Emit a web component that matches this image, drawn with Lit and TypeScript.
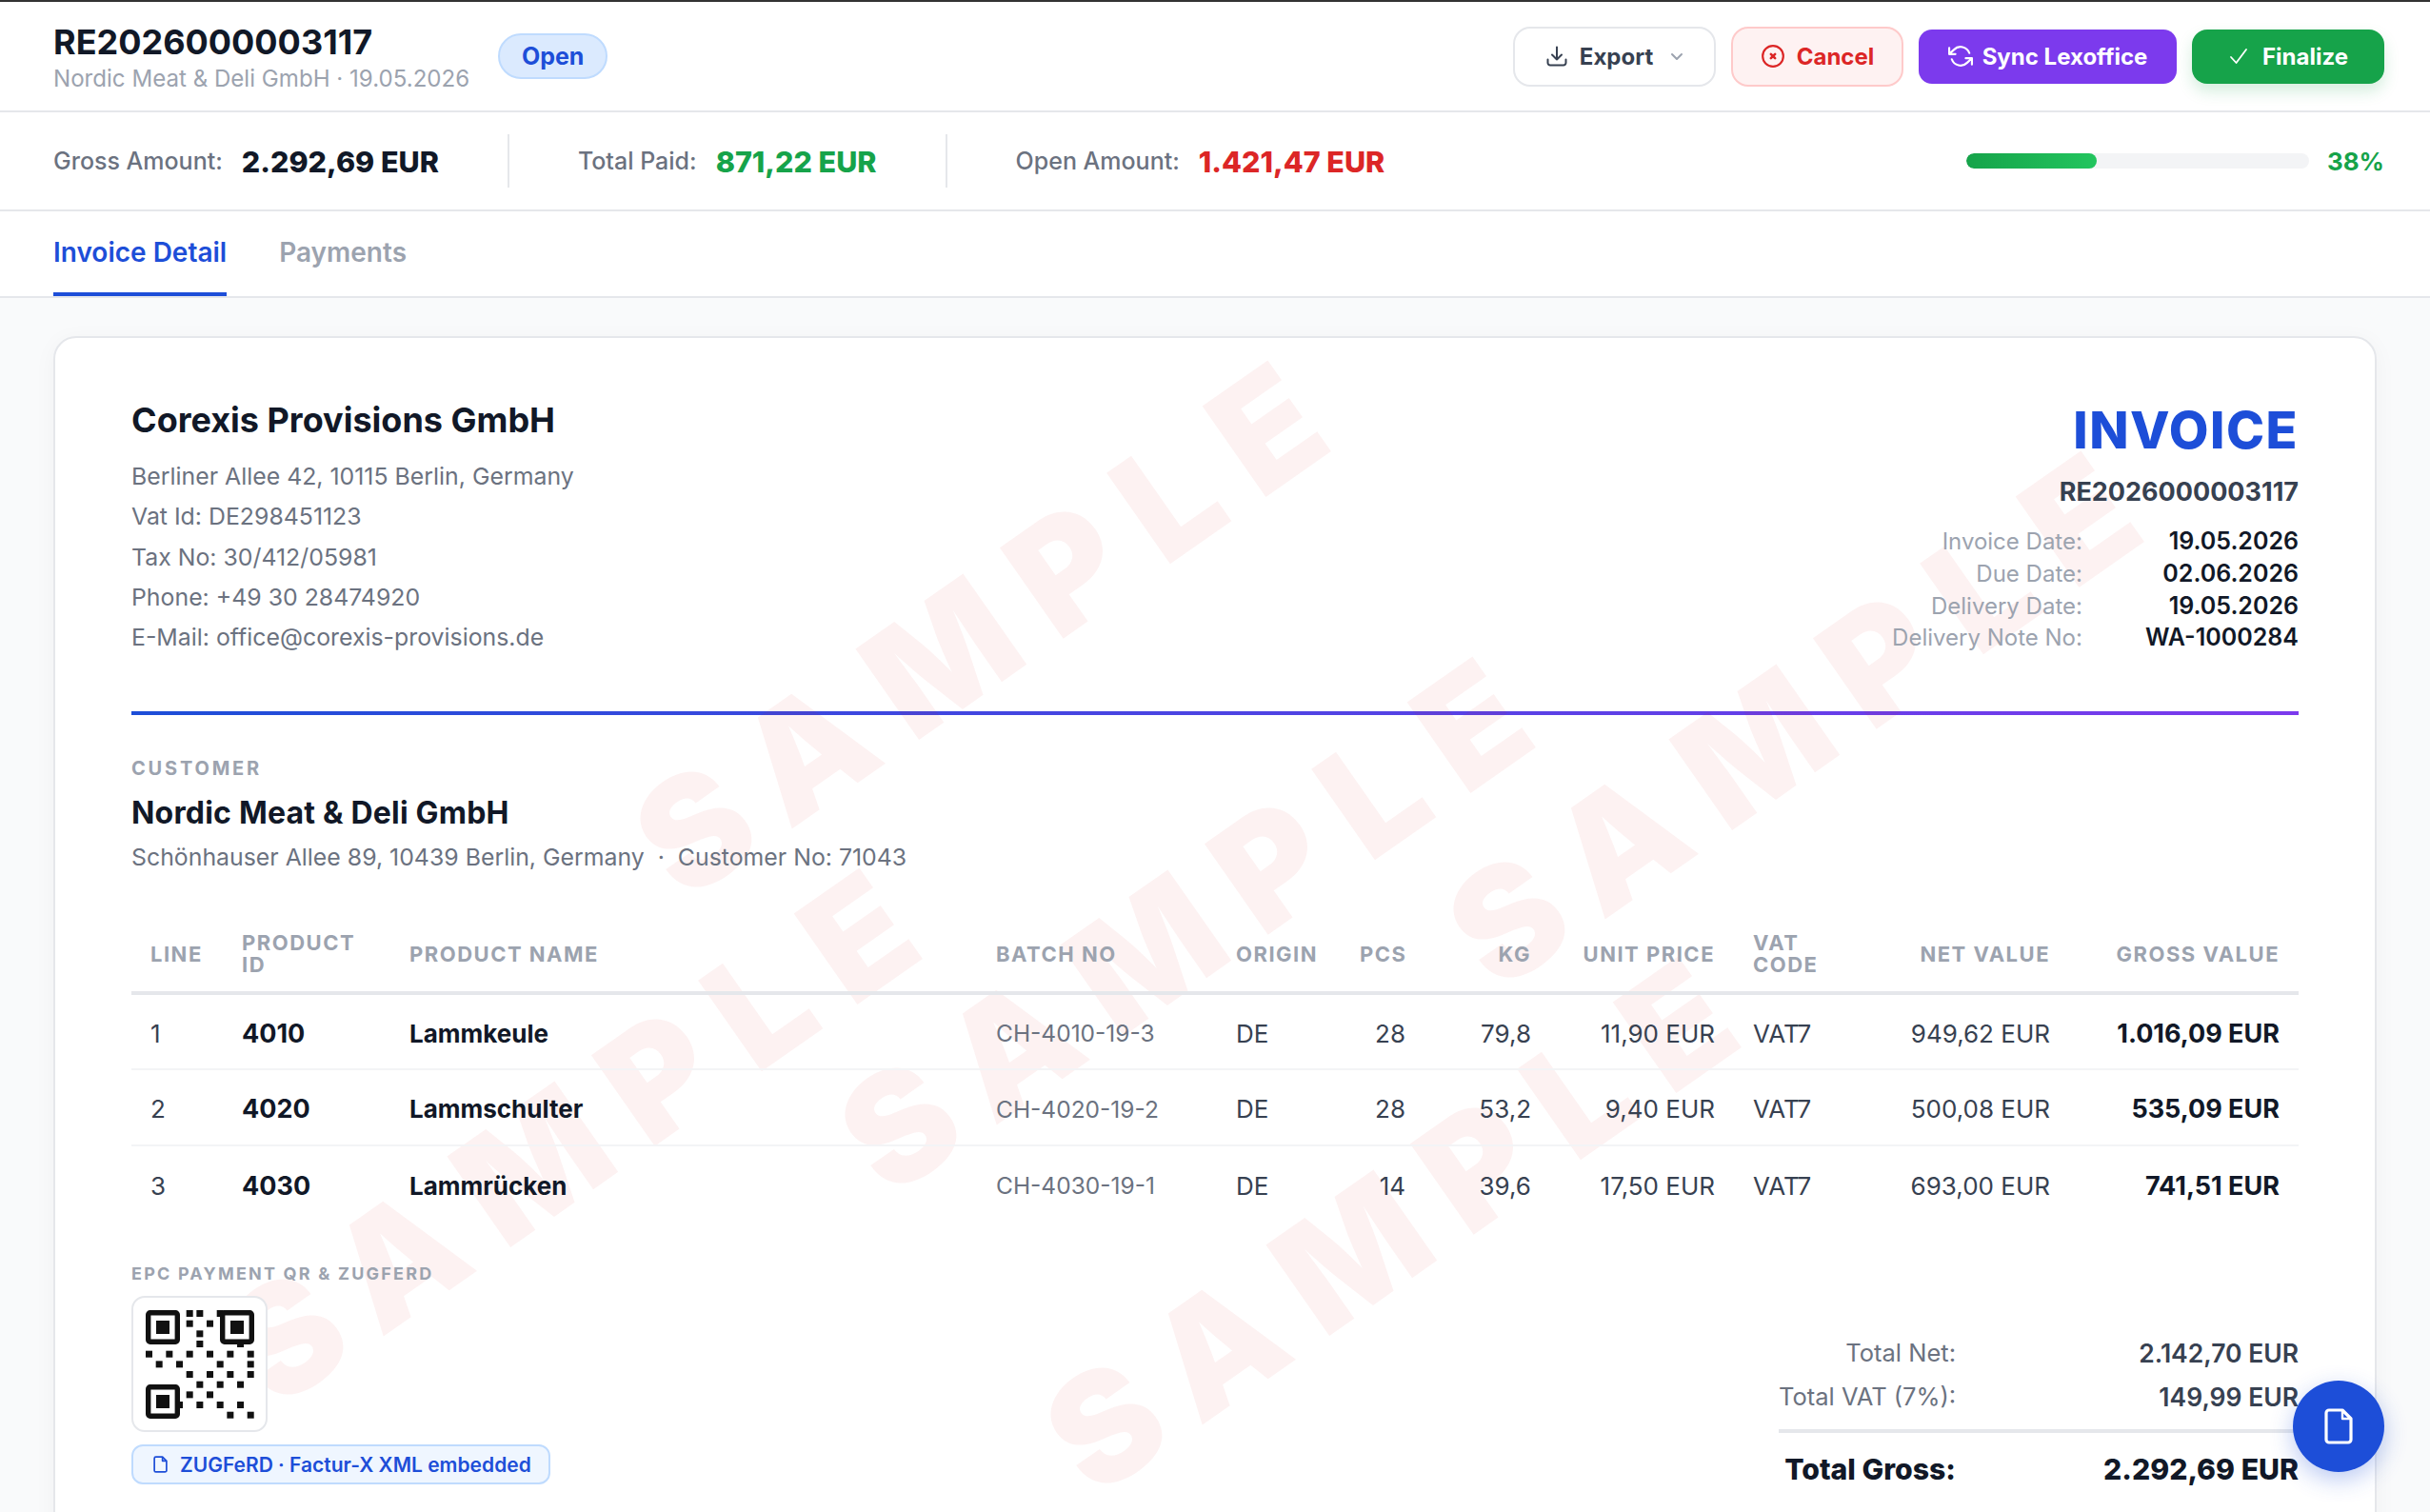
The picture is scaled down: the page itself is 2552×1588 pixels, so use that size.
import { LitElement, html, css, svg } from "lit";
import { customElement } from "lit/decorators.js";

const rows = [
  ["1", "4010", "Lammkeule", "CH-4010-19-3", "DE", "28", "79,8", "11,90 EUR", "VAT7", "949,62 EUR", "1.016,09 EUR"],
  ["2", "4020", "Lammschulter", "CH-4020-19-2", "DE", "28", "53,2", "9,40 EUR", "VAT7", "500,08 EUR", "535,09 EUR"],
  ["3", "4030", "Lammrücken", "CH-4030-19-1", "DE", "14", "39,6", "17,50 EUR", "VAT7", "693,00 EUR", "741,51 EUR"],
];
const marks = [[983, 298], [1198, 609], [1837, 393], [554, 831], [1414, 924]];
const cells = [[4,0],[5,0],[7,0],[4,1],[6,1],[5,2],[5,3],[9,3],[0,4],[2,4],[4,4],[6,4],[8,4],[10,4],[1,5],[3,5],[7,5],[10,5],[4,6],[6,6],[8,6],[10,6],[5,7],[7,7],[9,7],[4,8],[6,8],[3,9],[5,9],[7,9],[9,9],[2,10],[8,10],[10,10]];
const finders = [[0, 0], [78, 0], [0, 78]];

const fileIcon = html`<svg class="badge-ic" viewBox="0 0 16 18" fill="none" stroke="currentColor" stroke-width="1.6" stroke-linejoin="round"><path d="M2 3a1.5 1.5 0 0 1 1.5-1.5H10L14 5.5V15a1.5 1.5 0 0 1-1.5 1.5h-9A1.5 1.5 0 0 1 2 15Z"/><path d="M10 1.5v4h4"/></svg>`;

@customElement("app-root")
export class AppRoot extends LitElement {
  static styles = css`
    :host { display: block; height: 1588px; overflow: hidden; position: relative; background: #f9fafb; font-family: Inter, "Liberation Sans", sans-serif; color: #111827; }
    * { box-sizing: border-box; }
    .header { height: 118px; border-top: 2px solid #333; border-bottom: 2px solid #e5e7eb; background: #fff; display: flex; align-items: center; padding: 0 48px 0 56px; }
    .id { padding-top: 4px; }
    .title { font-size: 36px; line-height: 44px; font-weight: 700; }
    .sub { font-size: 24.1px; line-height: 34px; color: #9ca3af; }
    .pill { margin-left: 30px; height: 48px; width: 115px; display: flex; align-items: center; justify-content: center; border-radius: 24px; border: 2px solid #bfdbfe; background: #dbeafe; color: #1d4ed8; font-size: 25px; font-weight: 700; }
    .actions { margin-left: auto; display: flex; align-items: center; gap: 16px; }
    .btn { display: flex; align-items: center; justify-content: center; font-size: 24px; font-weight: 700; border-radius: 14px; height: 57px; }
    .btn svg { flex: none; }
    .export { width: 213px; height: 63px; border: 2px solid #e5e7eb; border-radius: 18px; background: #fff; color: #374151; gap: 12px; }
    .export .chev { color: #9ca3af; margin-left: 6px; }
    .cancel { width: 181px; height: 63px; border: 2px solid #fecaca; border-radius: 18px; background: #fef2f2; color: #dc2626; gap: 12px; }
    .sync { width: 271px; background: #7c3aed; color: #fff; gap: 10px; }
    .finalize { width: 202px; background: #16a34a; color: #fff; gap: 14px; border-radius: 16px; box-shadow: 0 8px 16px rgba(22, 163, 74, 0.18); }
    .stats { height: 104px; border-bottom: 2px solid #e5e7eb; background: #fff; display: flex; align-items: center; padding: 0 48px 0 56px; }
    .stat { display: flex; align-items: center; gap: 20px; }
    .stat-l { font-size: 25px; font-weight: 500; color: #6b7280; }
    .stat-v { font-size: 30.5px; font-weight: 800; }
    .green { color: #16a34a; }
    .red { color: #dc2626; }
    .vr { width: 2px; height: 56px; background: #e5e7eb; margin: 0 72px; }
    .prog { margin-left: auto; display: flex; align-items: center; gap: 19px; }
    .track { width: 360px; height: 16px; border-radius: 8px; background: #f3f4f6; overflow: hidden; }
    .fill { height: 100%; border-radius: 8px; background: linear-gradient(90deg, #16a34a, #22c55e); }
    .pct { font-size: 26px; font-weight: 700; color: #16a34a; }
    .tabs { height: 91px; border-bottom: 2px solid #e5e7eb; background: #fff; display: flex; gap: 55px; padding-left: 56px; }
    .tab { height: 89px; display: flex; align-items: center; font-size: 28px; font-weight: 600; color: #9ca3af; border-bottom: 4px solid transparent; }
    .tab.on { color: #1d4ed8; border-bottom-color: #1d4ed8; }
    .main { padding: 40px 56px 0; }
    .card { position: relative; overflow: hidden; background: #fff; border: 2px solid #e5e7eb; border-radius: 24px; padding: 64px 80px 80px; box-shadow: 0 4px 24px rgba(0, 0, 0, 0.04); }
    .mark { position: absolute; transform: translate(-50%, -50%) rotate(-35deg); font-size: 160px; line-height: 1; font-weight: 900; letter-spacing: 32px; color: rgba(220, 38, 38, 0.06); white-space: nowrap; pointer-events: none; }
    .top { display: flex; justify-content: space-between; padding-bottom: 57px; position: relative; }
    .co { font-size: 36px; line-height: 44px; font-weight: 700; margin-bottom: 16px; }
    .line { font-size: 24.85px; line-height: 42.3px; color: #6b7280; }
    .right { text-align: right; padding-top: 3px; }
    .inv { font-size: 54px; line-height: 60px; font-weight: 800; color: #1d4ed8; letter-spacing: 1.5px; }
    .num { font-size: 27px; line-height: 36px; font-weight: 700; color: #374151; margin-top: 17px; margin-bottom: 17px; }
    .dates { display: grid; grid-template-columns: auto auto; justify-content: end; column-gap: 66px; line-height: 33.8px; }
    .dates .k { font-size: 24px; color: #9ca3af; }
    .dates .v { font-size: 25px; font-weight: 600; }
    .rule { height: 4px; background: linear-gradient(90deg, #1d4ed8, #7c3aed); }
    .lab { font-size: 20px; line-height: 24px; font-weight: 700; letter-spacing: 2.8px; color: #9ca3af; text-transform: uppercase; }
    .epc { font-size: 18px; letter-spacing: 2.2px; }
    .cust { margin-top: 44px; position: relative; }
    .name { font-size: 32px; line-height: 40px; font-weight: 700; margin-top: 15px; letter-spacing: 0.2px; }
    .addr { font-size: 24.85px; line-height: 32px; color: #6b7280; margin-top: 10px; }
    table { width: 100%; table-layout: fixed; border-collapse: collapse; margin-top: 47px; position: relative; }
    th { font-size: 22px; line-height: 23px; font-weight: 700; letter-spacing: 1.5px; color: #9ca3af; text-align: left; padding: 16px 20px; border-bottom: 4px solid #e5e7eb; vertical-align: middle; }
    td { height: 80px; padding: 3px 0 0 20px; font-size: 26px; color: #374151; border-bottom: 2px solid #f3f4f6; white-space: nowrap; }
    td.r { padding: 3px 20px 0 0; }
    tr:last-child td { border-bottom: none; }
    .r { text-align: right; }
    .b { font-weight: 700; color: #111827; }
    .bb { font-size: 27px; font-weight: 700; color: #111827; }
    .batch { font-size: 24.5px; color: #6b7280; }
    .c1 { width: 96px; } .c2 { width: 176px; } .c3 { width: 616px; } .c4 { width: 252px; } .c5 { width: 130px; } .c6 { width: 88px; }
    .c7 { width: 132px; } .c8 { width: 193px; } .c9 { width: 167px; } .c10 { width: 185px; } .c11 { width: 241px; }
    .foot { display: flex; justify-content: space-between; margin-top: 43px; position: relative; }
    .qr { width: 143px; height: 143px; border: 2px solid #e5e7eb; border-radius: 14px; background: #fff; margin-top: 11px; display: flex; align-items: center; justify-content: center; }
    .qr svg { width: 114px; height: 114px; display: block; }
    .badge { width: 440px; height: 42px; margin-top: 13px; border: 2px solid #bfdbfe; border-radius: 12px; background: #eff6ff; color: #1d4ed8; font-size: 21px; font-weight: 600; display: flex; align-items: center; gap: 12px; padding-left: 20px; white-space: nowrap; }
    .badge-ic { width: 17px; height: 20px; flex: none; }
    .totals { width: 546px; margin-top: 72px; display: grid; grid-template-columns: 186px 1fr; align-items: center; }
    .totals .k { font-size: 25.5px; line-height: 46px; color: #6b7280; text-align: right; white-space: nowrap; }
    .totals .v { font-size: 26.5px; line-height: 46px; font-weight: 600; color: #374151; text-align: right; }
    .sep { grid-column: 1 / -1; height: 4px; background: #e5e7eb; margin: 11px 0 17px; }
    .totals .gk, .totals .gv { font-size: 30.2px; line-height: 42px; font-weight: 800; color: #111827; text-align: right; white-space: nowrap; }
    .fab { position: absolute; right: 48px; bottom: 42px; width: 96px; height: 96px; border-radius: 50%; background: #1d4ed8; display: flex; align-items: center; justify-content: center; box-shadow: 0 8px 24px rgba(29, 78, 216, 0.3); }
    .fab svg { width: 32px; height: 38px; }
  `;

  render() {
    return html`
      <div class="header">
        <div class="id">
          <div class="title">RE2026000003117</div>
          <div class="sub">Nordic Meat &amp; Deli GmbH · 19.05.2026</div>
        </div>
        <div class="pill">Open</div>
        <div class="actions">
          <div class="btn export">
            <svg width="24" height="24" viewBox="0 0 24 24" fill="none" stroke="currentColor" stroke-width="2" stroke-linecap="round" stroke-linejoin="round"><path d="M12 2.5v13M7 10.5l5 5 5-5M2.5 15.5v3.5a2.5 2.5 0 0 0 2.5 2.5h14a2.5 2.5 0 0 0 2.5-2.5v-3.5"/></svg>
            <span>Export</span>
            <svg class="chev" width="14" height="14" viewBox="0 0 14 14" fill="none" stroke="currentColor" stroke-width="2" stroke-linecap="round" stroke-linejoin="round"><path d="M2 5l5 5 5-5"/></svg>
          </div>
          <div class="btn cancel">
            <svg width="26" height="26" viewBox="0 0 24 24" fill="none" stroke="currentColor" stroke-width="2" stroke-linecap="round"><circle cx="12" cy="12" r="10"/><path d="M10 10l4 4M14 10l-4 4" stroke-width="2.4"/></svg>
            <span>Cancel</span>
          </div>
          <div class="btn sync">
            <svg width="26" height="26" viewBox="0 0 24 24" fill="none" stroke="currentColor" stroke-width="2" stroke-linecap="round" stroke-linejoin="round"><path d="M1 4v6h6M23 20v-6h-6M20.49 9A9 9 0 0 0 5.64 5.64L1 10M23 14l-4.64 4.36A9 9 0 0 1 3.51 15"/></svg>
            <span>Sync Lexoffice</span>
          </div>
          <div class="btn finalize">
            <svg width="22" height="22" viewBox="0 0 22 22" fill="none" stroke="currentColor" stroke-width="1.8" stroke-linecap="round" stroke-linejoin="round"><path d="M3 12l5.5 6L19 4"/></svg>
            <span>Finalize</span>
          </div>
        </div>
      </div>
      <div class="stats">
        <div class="stat"><span class="stat-l">Gross Amount:</span><span class="stat-v">2.292,69 EUR</span></div>
        <div class="vr"></div>
        <div class="stat"><span class="stat-l">Total Paid:</span><span class="stat-v green">871,22 EUR</span></div>
        <div class="vr"></div>
        <div class="stat"><span class="stat-l">Open Amount:</span><span class="stat-v red">1.421,47 EUR</span></div>
        <div class="prog">
          <div class="track"><div class="fill" style="width:38%"></div></div>
          <span class="pct">38%</span>
        </div>
      </div>
      <div class="tabs">
        <div class="tab on">Invoice Detail</div>
        <div class="tab">Payments</div>
      </div>
      <div class="main">
        <div class="card">
          ${marks.map(([x, y]) => html`<div class="mark" style="left:${x}px;top:${y}px">SAMPLE</div>`)}
          <div class="top">
            <div>
              <div class="co">Corexis Provisions GmbH</div>
              <div class="line">Berliner Allee 42, 10115 Berlin, Germany</div>
              <div class="line">Vat Id: DE298451123</div>
              <div class="line">Tax No: 30/412/05981</div>
              <div class="line">Phone: +49 30 28474920</div>
              <div class="line">E-Mail: office@corexis-provisions.de</div>
            </div>
            <div class="right">
              <div class="inv">INVOICE</div>
              <div class="num">RE2026000003117</div>
              <div class="dates">
                <span class="k">Invoice Date:</span><span class="v">19.05.2026</span>
                <span class="k">Due Date:</span><span class="v">02.06.2026</span>
                <span class="k">Delivery Date:</span><span class="v">19.05.2026</span>
                <span class="k">Delivery Note No:</span><span class="v">WA-1000284</span>
              </div>
            </div>
          </div>
          <div class="rule"></div>
          <div class="cust">
            <div class="lab">Customer</div>
            <div class="name">Nordic Meat &amp; Deli GmbH</div>
            <div class="addr">Schönhauser Allee 89, 10439 Berlin, Germany &nbsp;·&nbsp; Customer No: 71043</div>
          </div>
          <table>
            <thead>
              <tr>
                <th class="c1">LINE</th>
                <th class="c2">PRODUCT<br />ID</th>
                <th class="c3">PRODUCT NAME</th>
                <th class="c4">BATCH NO</th>
                <th class="c5">ORIGIN</th>
                <th class="c6 r">PCS</th>
                <th class="c7 r">KG</th>
                <th class="c8 r">UNIT PRICE</th>
                <th class="c9">VAT<br />CODE</th>
                <th class="c10 r">NET VALUE</th>
                <th class="c11 r">GROSS VALUE</th>
              </tr>
            </thead>
            <tbody>
              ${rows.map((r) => html`<tr>
                <td>${r[0]}</td>
                <td class="bb">${r[1]}</td>
                <td class="b">${r[2]}</td>
                <td class="batch">${r[3]}</td>
                <td>${r[4]}</td>
                <td class="r">${r[5]}</td>
                <td class="r">${r[6]}</td>
                <td class="r">${r[7]}</td>
                <td>${r[8]}</td>
                <td class="r">${r[9]}</td>
                <td class="r bb">${r[10]}</td>
              </tr>`)}
            </tbody>
          </table>
          <div class="foot">
            <div>
              <div class="lab epc">EPC Payment QR &amp; ZUGFeRD</div>
              <div class="qr">
                <svg viewBox="0 0 114 114">
                  ${cells.map(([i, j]) => svg`<rect x=${i * 10.67} y=${j * 10.67} width="7" height="7" fill="#111"/>`)}
                  ${finders.map(([x, y]) => svg`<rect x=${x + 2.7} y=${y + 2.7} width="30.6" height="30.6" rx="2" fill="#fff" stroke="#111" stroke-width="5.4"/><rect x=${x + 11} y=${y + 11} width="14" height="14" fill="#111"/>`)}
                </svg>
              </div>
              <div class="badge">${fileIcon}<span>ZUGFeRD · Factur-X XML embedded</span></div>
            </div>
            <div class="totals">
              <span class="k">Total Net:</span><span class="v">2.142,70 EUR</span>
              <span class="k">Total VAT (7%):</span><span class="v">149,99 EUR</span>
              <div class="sep"></div>
              <span class="gk">Total Gross:</span><span class="gv">2.292,69 EUR</span>
            </div>
          </div>
        </div>
      </div>
      <div class="fab">
        <svg viewBox="0 0 32 38" fill="none" stroke="#fff" stroke-width="3.2" stroke-linejoin="round"><path d="M3 5a3 3 0 0 1 3-3h14l9 9v22a3 3 0 0 1-3 3H6a3 3 0 0 1-3-3Z"/><path d="M20 2v9h9" stroke-width="2.4"/></svg>
      </div>
    `;
  }
}
